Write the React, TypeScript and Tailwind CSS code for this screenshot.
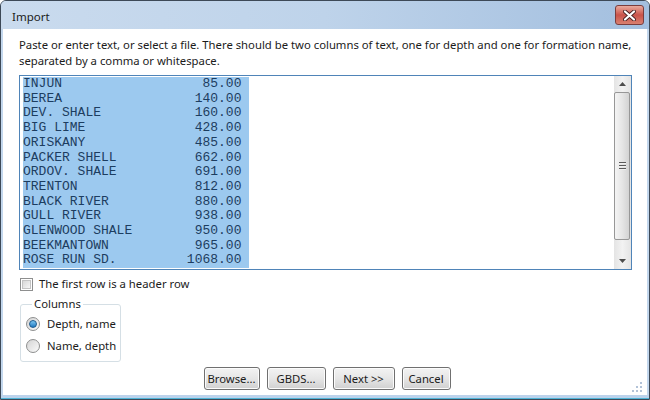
import React from 'react';

const rows: [string, string][] = [
  ['INJUN', '85.00'],
  ['BEREA', '140.00'],
  ['DEV. SHALE', '160.00'],
  ['BIG LIME', '428.00'],
  ['ORISKANY', '485.00'],
  ['PACKER SHELL', '662.00'],
  ['ORDOV. SHALE', '691.00'],
  ['TRENTON', '812.00'],
  ['BLACK RIVER', '880.00'],
  ['GULL RIVER', '938.00'],
  ['GLENWOOD SHALE', '950.00'],
  ['BEEKMANTOWN', '965.00'],
  ['ROSE RUN SD.', '1068.00'],
];

const line = (name: string, value: string) => name.padEnd(28 - value.length) + value;

const ui = "font-['Noto_Sans',sans-serif] text-[11.3px] text-[#1b1b1b]";

const Button = ({ label, width }: { label: string; width: string }) => (
  <button
    className={`${width} h-[23px] rounded-[3px] border border-[#707070] bg-gradient-to-b from-[#f3f3f3] via-[#e6e6e6] to-[#d0d0d0] leading-[21px] whitespace-nowrap shadow-[inset_0_0_0_1px_#fcfcfc]`}
  >
    {label}
  </button>
);

const Radio = ({ checked, label }: { checked?: boolean; label: string }) => (
  <label className="flex items-center h-[16px] gap-[7px] whitespace-nowrap">
    <span className="w-[14px] h-[14px] shrink-0 rounded-full border border-[#8e8f8f] bg-gradient-to-br from-[#d4d4d4] to-[#fbfbfb] flex items-center justify-center">
      {checked && (
        <span className="w-[8px] h-[8px] rounded-full border border-[#1c5a8e] bg-gradient-to-b from-[#7cc7f2] to-[#1c79c0]" />
      )}
    </span>
    <span>{label}</span>
  </label>
);

export default function App() {
  return (
    <div className={`${ui} w-[650px] h-[400px] flex flex-col border border-[#3d4957] rounded-t-[6px] overflow-hidden bg-[#c3d7ed]`}>
      {/* title bar */}
      <div className="h-[28px] flex items-start justify-between bg-gradient-to-r from-[#cadbee] via-[#bed3ea] to-[#a3bfdf]">
        <div className="pl-[11px] pt-[8px] leading-[16px] text-[11.5px]">Import</div>
        <div className="mt-[4px] mr-[5px] w-[29px] h-[20px] rounded-[3px] border border-[#7a3d3d] bg-gradient-to-b from-[#e9aa9e] via-[#c9524a] to-[#d98070] flex items-center justify-center">
          <svg width="13" height="11" viewBox="0 0 13 11">
            <path d="M2 1.5 L11 9.5 M11 1.5 L2 9.5" stroke="#4a2424" strokeWidth="4" strokeLinecap="round" />
            <path d="M2 1.5 L11 9.5 M11 1.5 L2 9.5" stroke="#ffffff" strokeWidth="2.2" strokeLinecap="round" />
          </svg>
        </div>
      </div>

      {/* client area */}
      <div className="relative mx-[2px] h-[366px] bg-white flex flex-col">
        <p className="pl-[16px] pr-[10px] pt-[8px] leading-[16px] whitespace-nowrap">
          Paste or enter text, or select a file. There should be two columns of text, one for depth and one for formation name,
          <br />
          separated by a comma or whitespace.
        </p>

        <div className="mt-[6px] ml-[16px] w-[613px] h-[195px] border border-[#4f84b8] flex">
          <div className="flex-1 pl-[3px] pt-[1px] font-['Liberation_Mono',monospace] text-[13px] leading-[14.7px] text-[#1c3d60]">
            {rows.map(([n, v]) => (
              <div key={n} className="w-[226px] bg-[#9cc9ef] whitespace-pre">
                {line(n, v)}
              </div>
            ))}
          </div>
          <div className="w-[17px] flex flex-col bg-gradient-to-r from-[#e4e4e4] via-[#f2f2f2] to-[#e4e4e4]">
            <div className="h-[16px] flex items-center justify-center">
              <svg width="7" height="4" viewBox="0 0 7 4">
                <path d="M3.5 0 L7 4 L0 4 Z" fill="#4d4d4d" />
              </svg>
            </div>
            <div className="h-[148px] mr-[1px] rounded-[2px] border border-[#979797] bg-gradient-to-r from-[#f4f4f4] via-[#e6e6e6] to-[#d3d3d3] flex items-center justify-center">
              <div className="flex flex-col gap-[1px]">
                <span className="w-[7px] h-[2px] bg-[#5a5a5a] border-b border-[#f0f0f0]" />
                <span className="w-[7px] h-[2px] bg-[#5a5a5a] border-b border-[#f0f0f0]" />
                <span className="w-[7px] h-[2px] bg-[#5a5a5a] border-b border-[#f0f0f0]" />
              </div>
            </div>
            <div className="flex-1" />
            <div className="h-[17px] flex items-center justify-center">
              <svg width="7" height="4" viewBox="0 0 7 4">
                <path d="M0 0 L7 0 L3.5 4 Z" fill="#4d4d4d" />
              </svg>
            </div>
          </div>
        </div>

        <label className="mt-[6px] ml-[17px] flex items-center h-[16px] gap-[6px]">
          <span className="w-[13px] h-[13px] border border-[#8e8f8f] bg-white p-[1px]">
            <span className="block w-full h-full border border-[#c3c3c3] bg-gradient-to-br from-[#d8d8d8] to-[#f6f6f6]" />
          </span>
          <span>The first row is a header row</span>
        </label>

        <fieldset className="mt-[4px] ml-[17px] w-[101px] border border-[#d5dfe5] rounded-[3px] pl-[5px] pb-[7px]">
          <legend className="ml-[6px] px-[2px] leading-[16px]">Columns</legend>
          <div className="pt-[4px] flex flex-col gap-[6px]">
            <Radio checked label="Depth, name" />
            <Radio label="Name, depth" />
          </div>
        </fieldset>

        <div className="mt-[5px] pl-[4px] flex justify-center gap-[7px]">
          <Button label="Browse..." width="w-[56px]" />
          <Button label="GBDS..." width="w-[59px]" />
          <Button label="Next >>" width="w-[62px]" />
          <Button label="Cancel" width="w-[49px]" />
        </div>

        <svg className="absolute right-[4px] bottom-[2px]" width="11" height="11" viewBox="0 0 11 11">
          <rect x="8" y="0" width="2" height="2" fill="#b3c3d8" />
          <rect x="4" y="4" width="2" height="2" fill="#b3c3d8" />
          <rect x="8" y="4" width="2" height="2" fill="#b3c3d8" />
          <rect x="0" y="8" width="2" height="2" fill="#b3c3d8" />
          <rect x="4" y="8" width="2" height="2" fill="#b3c3d8" />
          <rect x="8" y="8" width="2" height="2" fill="#b3c3d8" />
        </svg>
      </div>
      <div className="h-[3px] mx-[0px] bg-[#bcd3ec]" />
      <div className="h-[1px] bg-[#4fb3d6]" />
    </div>
  );
}
